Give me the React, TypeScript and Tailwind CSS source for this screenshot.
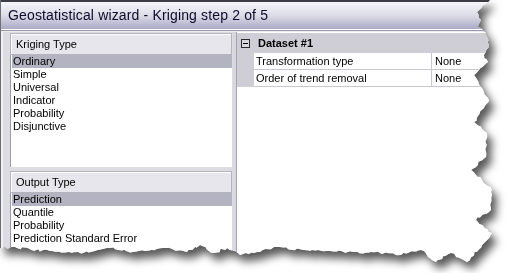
import React from 'react'

// rough outline of the torn-paper edge, traced from the screenshot
const rightEdge: [number, number][] = [
  [490, 0], [486, 4], [477, 12], [481, 20], [478, 27], [486, 33], [489, 45], [484, 55],
  [488, 62], [474, 75], [481, 87], [484, 92], [489, 100], [474, 122], [487, 133],
  [486, 157], [471, 170], [492, 190], [491, 210], [476, 220], [492, 233], [467, 262],
]
const bottomEdge: [number, number][] = [
  [451, 253], [436, 262], [421, 250], [401, 255], [380, 253], [354, 252], [330, 251],
  [304, 250], [274, 247], [260, 252], [240, 255], [227, 248], [213, 253], [200, 245],
  [187, 252], [167, 248], [133, 252], [110, 248], [83, 253], [50, 251], [17, 248], [0, 248],
]

function tornPolygon() {
  let seed = 7
  const rand = () => {
    seed = (seed * 9301 + 49297) % 233280
    return seed / 233280 - 0.5
  }
  const pts: string[] = ['0px 0px']
  const all = [...rightEdge, ...bottomEdge]
  for (let i = 0; i < all.length - 1; i++) {
    const [x1, y1] = all[i]
    const [x2, y2] = all[i + 1]
    const steps = Math.max(1, Math.round(Math.hypot(x2 - x1, y2 - y1) / 3))
    for (let s = 0; s < steps; s++) {
      const t = s / steps
      const jx = s === 0 ? 0 : rand() * 2.5
      const jy = s === 0 ? 0 : rand() * 2.5
      pts.push(`${(x1 + (x2 - x1) * t + jx).toFixed(1)}px ${(y1 + (y2 - y1) * t + jy).toFixed(1)}px`)
    }
  }
  pts.push('0px 248px')
  return `polygon(${pts.join(', ')})`
}

const krigingTypes = ['Ordinary', 'Simple', 'Universal', 'Indicator', 'Probability', 'Disjunctive']
const outputTypes = ['Prediction', 'Quantile', 'Probability', 'Prediction Standard Error']

function GroupHeader({ title }: { title: string }) {
  return (
    <div className="h-[22px] flex items-center pl-[5px] border border-[#b4b4bc] bg-[#e6e6ec] shadow-[inset_1px_1px_0_#ffffff] text-[11px] text-black">
      {title}
    </div>
  )
}

function ListBox({ items, height }: { items: string[]; height: string }) {
  return (
    <div className={`${height} bg-white border-l border-[#9c9ca4] pl-[1px]`}>
      {items.map((item, i) => (
        <div
          key={item}
          className={`h-[13px] leading-[13px] pl-[1px] text-[11px] text-black ${i === 0 ? 'bg-[#b3b3c1]' : ''}`}
        >
          {item}
        </div>
      ))}
    </div>
  )
}

export default function App() {
  return (
    <div className="min-h-screen bg-white font-['Liberation_Sans',Arial,sans-serif]">
      <div className="w-[500px] h-[270px] drop-shadow-[5px_7px_4px_rgba(0,0,0,0.65)]">
        <div
          style={{ clipPath: tornPolygon() }}
          className="w-[500px] h-[270px] bg-[#dddce3] flex flex-col border-l border-[#6f6f78]"
        >
          {/* Title bar */}
          <div className="h-[29px] border-t-2 border-[#3c3c44] bg-gradient-to-b from-[#f7f7fa] via-[#dcdce8] to-[#aaaac6] flex items-center pl-[7px] pb-[1px]">
            <span className="text-[14px] text-[#0c0c2a] tracking-[0.15px]">
              Geostatistical wizard - Kriging step 2 of 5
            </span>
          </div>
          <div className="h-px bg-white" />
          <div className="h-px bg-[#9a9aac]" />
          <div className="h-px bg-[#ececf0]" />

          {/* Body */}
          <div className="flex flex-1 border-l-2 border-[#f0f0f4]">
            {/* Left column */}
            <div className="w-[222px] ml-[7px] pt-[1px] flex flex-col">
              <GroupHeader title="Kriging Type" />
              <ListBox items={krigingTypes} height="h-[112px]" />
              <div className="h-[4px]" />
              <GroupHeader title="Output Type" />
              <ListBox items={outputTypes} height="flex-1" />
            </div>

            {/* Splitter */}
            <div className="w-[4px] ml-[1px] bg-[#d8d7de] border-r border-[#a4a4ae]" />

            {/* Property grid */}
            <div className="flex-1 bg-white pt-[1px]">
              <div className="h-[20px] bg-[#cfcdd5] flex items-center">
                <div className="w-[17px] flex justify-center">
                  <div className="w-[9px] h-[9px] border border-[#2a2a2a] bg-[#d8d7dd] flex items-center justify-center">
                    <div className="w-[5px] h-px bg-black" />
                  </div>
                </div>
                <span className="text-[11px] font-bold text-black ml-[4px]">Dataset #1</span>
              </div>
              {[['Transformation type', 'None'], ['Order of trend removal', 'None']].map(([name, value]) => (
                <div key={name} className="flex h-[17px]">
                  <div className="w-[17px] bg-[#cfcdd5]" />
                  <div className="w-[177px] border-b border-[#c8c8d0] flex items-center pl-[2px] text-[11px] text-black">
                    {name}
                  </div>
                  <div className="flex-1 border-b border-l border-[#c8c8d0] flex items-center pl-[3px] text-[11px] text-black">
                    {value}
                  </div>
                </div>
              ))}
            </div>
          </div>
        </div>
      </div>
    </div>
  )
}
